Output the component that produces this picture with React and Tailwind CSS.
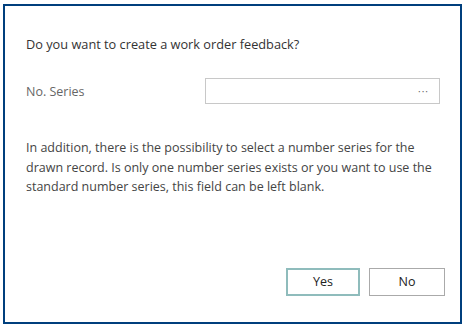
import React from 'react'

const App = () => {
  return (
    <div className="w-[465px] h-[328px] bg-white pt-[4px] pl-[3px]" style={{ fontFamily: '"Open Sans", "Noto Sans", sans-serif' }}>
      <div className="w-[459px] h-[320px] border-[2px] border-[#003f7d] bg-white flex flex-col">
        <p className="mt-[29px] ml-[21px] text-[12.75px] leading-[18px] text-[#333]">
          Do you want to create a work order feedback?
        </p>

        <div className="mt-[25px] ml-[21px] flex items-center">
          <span className="w-[179px] pt-[3px] text-[12.5px] text-[#666]">No. Series</span>
          <div className="w-[235px] h-[26px] border border-[#c8c8c8] flex items-center justify-end pr-[10px]">
            <span className="text-[10px] tracking-[1px] text-[#666] leading-none">···</span>
          </div>
        </div>

        <p className="mt-[34px] ml-[21px] w-[430px] whitespace-nowrap text-[12.5px] leading-[19.5px] text-[#444]">
          In addition, there is the possibility to select a number series for the
          <br />
          drawn record. Is only one number series exists or you want to use the
          <br />
          standard number series, this field can be left blank.
        </p>

        <div className="mt-auto mb-[26px] mr-[15px] flex justify-end gap-[9px]">
          <button className="w-[74px] h-[28px] border-[2px] border-[#8fbcbc] text-[12.5px] text-[#222] bg-white">
            Yes
          </button>
          <button className="w-[76px] h-[28px] border border-[#aaa] text-[12.5px] text-[#222] bg-white">
            No
          </button>
        </div>
      </div>
    </div>
  )
}

export default App
